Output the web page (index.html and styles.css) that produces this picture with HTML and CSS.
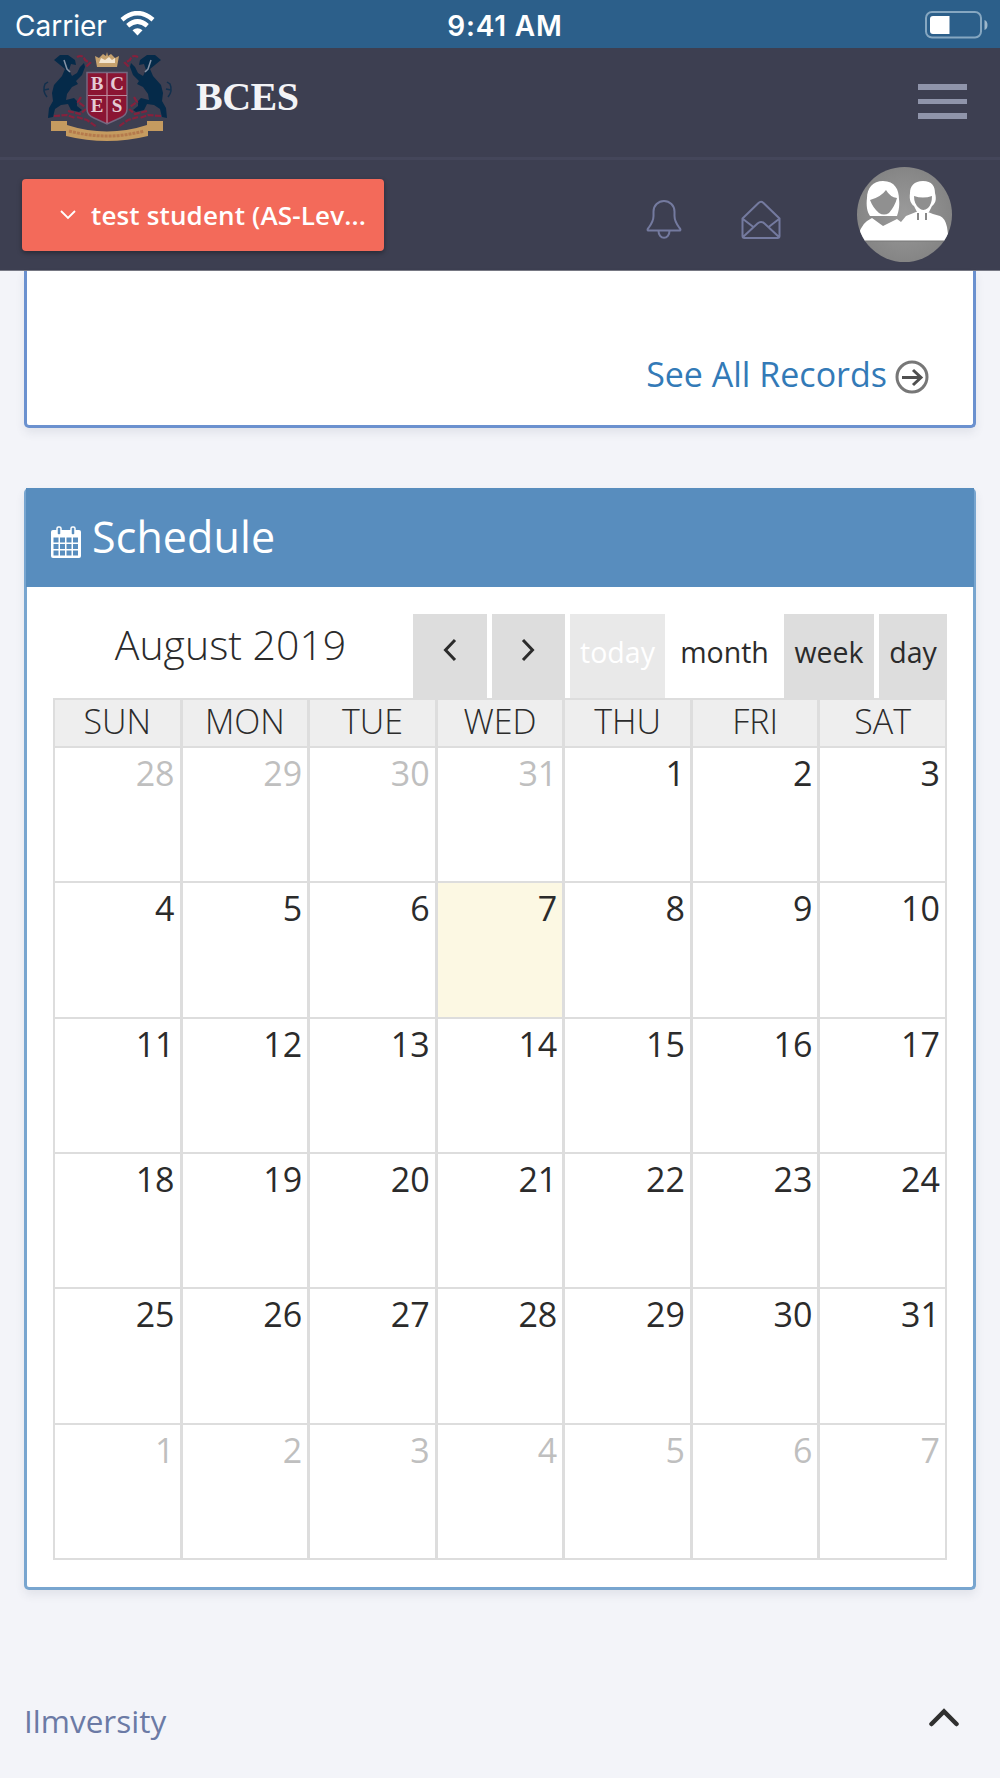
FILE: index.html
```html
<!DOCTYPE html>
<html lang="en">
<head>
  <meta charset="UTF-8">
  <meta name="viewport" content="width=device-width, initial-scale=1.0">
  <title>BCES</title>
  <link rel="stylesheet" href="styles.css">
</head>
<body>
  <div class="status-bar">
    <div class="carrier">
      <span>Carrier</span>
      <svg width="35" height="26" viewBox="0 0 35 26">
        <path d="M17.500 24.500L12.500 19.300Q17.500 15.300 22.500 19.300Z" fill="#fff"/>
        <path d="M7.700 14.700Q17.500 6.300 27.300 14.700M2 8.700Q17.500 -4.300 33 8.700" fill="none" stroke="#fff" stroke-width="4.600"/>
      </svg>
    </div>
    <div class="time">9:41 AM</div>
    <svg class="battery" width="64" height="28" viewBox="0 0 64 28">
      <rect x="1" y="1" width="55" height="25.500" rx="6" fill="none" stroke="#86a7c1" stroke-width="2"/>
      <path d="M8 5h16.500v18H8a3 3 0 0 1-3-3V8a3 3 0 0 1 3-3z" fill="#fff"/>
      <path d="M59.500 9v10q3-1 3-5t-3-5z" fill="#9db7cb"/>
    </svg>
  </div>

  <header class="header">
    <div class="brand-row">
      <svg class="crest" width="136" height="92" viewBox="0 0 136 92">
        <g id="lion">
          <path d="M14 9l6-5 8 0 7 5 1 5-5-1-2 6 3 6 5-3 3-6 4-4 1 4-3 8-6 6 2 3-6 3-5 7-1 6 8-2 3 3 0 5 5 4-3 2-8-2-3-6-7 1-6 4-2 8-5 1 1-10 4-7-1-8 2-8 8-9 3-7z" fill="#052a49"/>
          <path d="M7 46q-5-6-2-13l3-2M9 38l-5 1" fill="none" stroke="#12304d" stroke-width="1.500"/>
          <path d="M24 9l3 9 3 3" fill="none" stroke="#8593a6" stroke-width="1.500"/>
          <path d="M37 6q6-3 8 3l5 3-4 4M14 65l13-1 8 3M28 60l12 3 6-5M41 46l-3 5 7 5M37 66l10 3 10 7" fill="none" stroke="#86213d" stroke-width="2.200" stroke-dasharray="6 1.500"/>
        </g>
        <use href="#lion" transform="translate(135 0) scale(-1 1)"/>
        <path d="M57 16l-2-11 4 2 4-4 3 2 1-4 1 4 3-2 4 4 4-2-2 11z" fill="#c6a16e"/>
        <path d="M59 12h16V7l-3 2-3-3-4 3-4-2z" fill="#f4e5cf"/>
        <path d="M47 21.500h40V58q0 6-7 9l-13 6-13-6q-7-3-7-9z" fill="#8b1533" stroke="#756780" stroke-width="1.500"/>
        <path d="M67 22v50M48 44.500h39" stroke="#bd8c9e" stroke-width="1.200"/>
        <path d="M11 70h16v4q40 13 80 0v-4h16v10h-15v5q-41 10-82 0v-5H11z" fill="#c59b60"/>
        <path d="M29 80q38 10 75 0" fill="none" stroke="#b57a4c" stroke-width="3" stroke-dasharray="3 1"/>
        <g class="crest-letters">
          <text x="57" y="39">B</text><text x="77" y="39">C</text>
          <text x="57" y="61">E</text><text x="77" y="61">S</text>
        </g>
      </svg>
      <span class="brand">BCES</span>
      <div class="menu-toggle"><span></span><span></span><span></span></div>
    </div>
    <div class="user-row">
      <div class="student-select">
        <svg width="16" height="10" viewBox="0 0 16 10"><path d="M1 1l7 7 7-7" fill="none" stroke="#fff" stroke-width="1.800"/></svg>
        <span>test student (AS-Lev...</span>
      </div>
      <svg class="bell" width="36" height="40" viewBox="0 0 36 40">
        <path d="M2.500 30.500h31c1.500 0 1-1.500 0-2.500-3-4-5-7-5-12v-4.500a10.500 10.500 0 0 0-21 0V16c0 5-2 8-5 12-1 1-1.500 2.500 0 2.500zM12.500 31a5.500 6.800 0 0 0 11 0" fill="none" stroke="#747a9f" stroke-width="2"/>
      </svg>
      <svg class="mail" width="40" height="40" viewBox="0 0 40 40">
        <path d="M1.500 18.500L17.500 3q2.500-2.500 5 0l16 15.500V36q0 2-2 2h-33q-2 0-2-2zM2 37l14.500-13.500q3.500-3 7 0L38 37M2 19l11 8.500M38 19l-11 8.500" fill="none" stroke="#747a9f" stroke-width="2"/>
      </svg>
      <svg class="avatar" width="95" height="95" viewBox="0 0 95 95">
        <defs>
          <radialGradient id="avatar-bg"><stop offset="0" stop-color="#9b9b9b"/><stop offset="1" stop-color="#858585"/></radialGradient>
          <clipPath id="avatar-clip"><circle cx="47.500" cy="47.500" r="47.500"/></clipPath>
        </defs>
        <g clip-path="url(#avatar-clip)">
          <rect width="95" height="95" fill="url(#avatar-bg)"/>
          <path d="M0 74q3-15 10-20l5-3 11 8 14-7 4 3 5-6 10-4h12l5 2 7 2q5 2 7 11l2 14z" fill="#fff"/>
          <path d="M26 14c12 0 16 9 16 18 1 8-1 14-2 17H13c-3-4-4-11-3-18 0-10 6-17 16-17z" fill="#fff"/>
          <path d="M13 33q11-3 16-10 4 7 11 8-2 8-8 15-5 3-10 0-6-5-9-13z" fill="#909090"/>
          <path d="M66 14c9 0 12 5 12 12 2 7 0 11-3 13l-3 6H60l-3-6c-3-2-5-6-4-13 0-7 4-12 13-12z" fill="#fff"/>
          <path d="M57 29q9 3 18 0 0 8-4 12-5 4-9 0-5-4-5-12z" fill="#8f8f8f"/>
          <path d="M61 46v7M69 46v7" stroke="#888" stroke-width="2"/>
          <path d="M0 74h95" stroke="#777" stroke-width="1"/>
        </g>
      </svg>
    </div>
  </header>

  <main class="content">
    <section class="panel records">
      <a class="see-all">See All Records</a>
      <svg width="34" height="34" viewBox="0 0 34 34">
        <circle cx="17" cy="17" r="15" fill="none" stroke="#777" stroke-width="3"/>
        <path d="M7 17.500h18M18 10l8 7.500-8 7.500" fill="none" stroke="#505050" stroke-width="3"/>
      </svg>
    </section>

    <section class="panel schedule">
      <h2 class="panel-heading">
        <svg width="30" height="32" viewBox="0 0 30 32">
          <path d="M2 4h26q2 0 2 2v24q0 2-2 2H2q-2 0-2-2V6q0-2 2-2z" fill="#fff"/>
          <path d="M2.500 11.500h5v5h-5zM9 11.500h5v5H9zM15.500 11.500h5v5h-5zM22 11.500h5v5h-5zM2.500 18h5v5h-5zM9 18h5v5H9zM15.500 18h5v5h-5zM22 18h5v5h-5zM2.500 24.500h5v5h-5zM9 24.500h5v5H9zM15.500 24.500h5v5h-5zM22 24.500h5v5h-5z" fill="#588dbe"/>
          <rect x="6" y="1" width="4" height="8" rx="1.500" fill="#588dbe" stroke="#fff" stroke-width="1.500"/>
          <rect x="20" y="1" width="4" height="8" rx="1.500" fill="#588dbe" stroke="#fff" stroke-width="1.500"/>
        </svg>
        <span>Schedule</span>
      </h2>
      <div class="toolbar">
        <h3 class="month-title">August 2019</h3>
        <div class="btn arrow"><svg width="14" height="24" viewBox="0 0 14 24"><path d="M12 2L2.500 12 12 22" fill="none" stroke="#2b2b2b" stroke-width="3"/></svg></div>
        <div class="btn arrow"><svg width="14" height="24" viewBox="0 0 14 24"><path d="M2 2l9.500 10L2 22" fill="none" stroke="#2b2b2b" stroke-width="3"/></svg></div>
        <div class="btn today">today</div>
        <div class="btn month">month</div>
        <div class="btn week">week</div>
        <div class="btn day">day</div>
      </div>
      <div class="calendar">
        <div class="weekday">SUN</div><div class="weekday">MON</div><div class="weekday">TUE</div><div class="weekday">WED</div><div class="weekday">THU</div><div class="weekday">FRI</div><div class="weekday">SAT</div>
        <div class="date other">28</div><div class="date other">29</div><div class="date other">30</div><div class="date other">31</div><div class="date">1</div><div class="date">2</div><div class="date">3</div>
        <div class="date">4</div><div class="date">5</div><div class="date">6</div><div class="date current">7</div><div class="date">8</div><div class="date">9</div><div class="date">10</div>
        <div class="date">11</div><div class="date">12</div><div class="date">13</div><div class="date">14</div><div class="date">15</div><div class="date">16</div><div class="date">17</div>
        <div class="date">18</div><div class="date">19</div><div class="date">20</div><div class="date">21</div><div class="date">22</div><div class="date">23</div><div class="date">24</div>
        <div class="date">25</div><div class="date">26</div><div class="date">27</div><div class="date">28</div><div class="date">29</div><div class="date">30</div><div class="date">31</div>
        <div class="date other">1</div><div class="date other">2</div><div class="date other">3</div><div class="date other">4</div><div class="date other">5</div><div class="date other">6</div><div class="date other">7</div>
      </div>
    </section>
  </main>

  <footer class="footer">
    <span>Ilmversity</span>
    <svg width="30" height="19" viewBox="0 0 30 19"><path d="M2.500 16L15 3.500 27.500 16" fill="none" stroke="#303030" stroke-width="4.500" stroke-linecap="round"/></svg>
  </footer>
</body>
</html>
```
FILE: styles.css
```css
* {
  box-sizing: border-box;
}
body {
  margin: 0;
  height: 1778px;
  overflow: hidden;
  background: #f3f4f9;
  font-family: "Open Sans", sans-serif;
  color: #2b2b2b;
}
svg {
  display: block;
  flex: none;
}
.status-bar {
  display: grid;
  grid-template-columns: 1fr auto 1fr;
  align-items: center;
  height: 48px;
  padding: 4px 11px 0 15px;
  background: #2c5f8a;
  color: #fff;
  font: 28px Inter, sans-serif;
}
.carrier {
  display: flex;
  gap: 13px;
}
.carrier svg {
  margin-top: 2px;
}
.time {
  padding-left: 6px;
  font-weight: 600;
  letter-spacing: 0.8px;
}
.battery {
  justify-self: end;
  margin-bottom: 3px;
}
.header {
  height: 223px;
  background: #3d3f51;
  border-bottom: 1px solid #777985;
}
.brand-row {
  display: flex;
  height: 112px;
  padding: 3px 33px 0 40px;
  border-bottom: 3px solid #44465a;
}
.crest-letters {
  fill: #e4cbd4;
  font: bold 19px "Liberation Serif", serif;
  text-anchor: middle;
}
.brand {
  margin: 23px 0 0 20px;
  color: #f3f3f6;
  font: bold 40px/46px "Liberation Serif", serif;
  letter-spacing: -0.5px;
}
.menu-toggle {
  display: flex;
  flex-direction: column;
  gap: 9px;
  width: 49px;
  margin: 33px 0 0 auto;
}
.menu-toggle span {
  height: 5.500px;
  background: #8f94aa;
}
.user-row {
  display: flex;
  height: 110px;
  padding: 7px 48px 0 22px;
}
.student-select {
  display: flex;
  align-items: center;
  gap: 15px;
  width: 362px;
  height: 72px;
  margin-top: 12px;
  padding: 0 0 1px 38px;
  border-radius: 4px;
  background: #f36a5a;
  box-shadow: 0 2px 5px rgba(0, 0, 0, 0.35);
  color: #fff;
  font-size: 26px;
  font-weight: 600;
  letter-spacing: 0.15px;
  white-space: nowrap;
}
.bell {
  margin: 33px 0 0 262px;
}
.mail {
  margin: 33px 0 0 59px;
}
.avatar {
  margin: 0 0 0 auto;
}
.content {
  padding: 0 24px;
}
.panel {
  background: #fff;
  border: 3px solid #78a5cf;
  border-radius: 5px;
  box-shadow: 0 5px 10px rgba(60, 70, 90, 0.09);
}
.records {
  display: flex;
  justify-content: flex-end;
  height: 157px;
  padding: 80px 44px 0 0;
  border-color: #6b91cf;
  border-top: 0;
  border-radius: 0 0 5px 5px;
}
.see-all {
  margin-right: 8px;
  color: #337ab7;
  font-size: 34px;
  line-height: 46px;
}
.records svg {
  margin-top: 9px;
}
.schedule {
  height: 1102px;
  margin-top: 60px;
  border-top: 0;
}
.panel-heading {
  display: flex;
  height: 99px;
  margin: 0 -1px;
  padding-left: 25px;
  gap: 11px;
  background: #588dbe;
  color: #fff;
  font-size: 43px;
  font-weight: 400;
  letter-spacing: 0.1px;
  line-height: 98px;
}
.panel-heading svg {
  margin-top: 38px;
}
.toolbar {
  display: flex;
  gap: 5px;
  height: 111px;
  padding: 27px 26px 0 26px;
}
.month-title {
  width: 355px;
  margin: 0;
  text-align: center;
  font-size: 41px;
  font-weight: 300;
  line-height: 60px;
}
.btn {
  height: 84px;
  background: #ddd;
  font-size: 28.500px;
  line-height: 77px;
  text-align: center;
}
.arrow {
  display: flex;
  justify-content: center;
  width: 73.500px;
  padding-top: 24px;
}
.today {
  width: 95px;
  background: #e9e9e9;
  color: #fff;
}
.month {
  width: 109px;
  background: #fff;
}
.week {
  width: 90px;
}
.day {
  width: 68px;
}
.calendar {
  display: grid;
  grid-template-columns: repeat(7, 1fr);
  grid-template-rows: 46px repeat(6, 1fr);
  gap: 2px 3px;
  height: 862px;
  margin: 0 26px;
  border: 2px solid #ddd;
  background: #ddd;
}
.weekday {
  background: #eee;
  font-size: 34px;
  font-weight: 300;
  line-height: 43px;
  text-align: center;
}
.date {
  padding-right: 5px;
  background: #fff;
  font-size: 34px;
  line-height: 51px;
  text-align: right;
}
.other {
  color: #bfbfbf;
}
.current {
  background: #fcf8e3;
}
.footer {
  display: flex;
  justify-content: space-between;
  margin-top: 109px;
  padding: 0 41px 0 24px;
  color: #6b7aa5;
  font-size: 31.500px;
  line-height: 44px;
}
.footer svg {
  margin-top: 9px;
}
```
